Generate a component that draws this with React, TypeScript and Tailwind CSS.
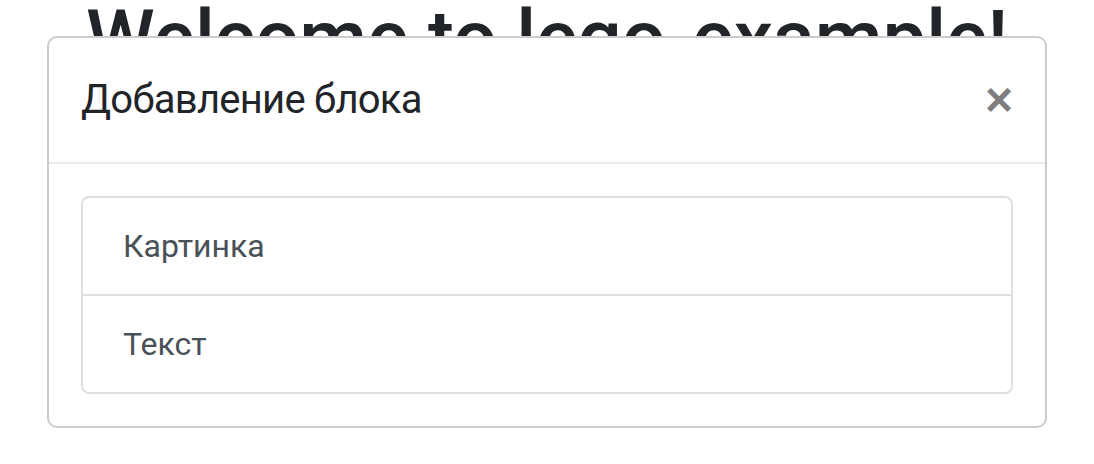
import React from 'react'

const items = ['Картинка', 'Текст']

const App: React.FC = () => {
  return (
    <div className="relative h-[464px] w-full overflow-hidden bg-white" style={{ fontFamily: 'Roboto, "Noto Sans", sans-serif' }}>
      <h1 className="mt-[-9px] text-center text-[78px] font-medium leading-[96px] tracking-[-0.15px] text-[#212529]">Welcome to lego-example!</h1>

      {/* модальное окно поверх заголовка */}
      <div className="absolute inset-x-0 top-[36px] mx-auto w-[1000px] rounded-[10px] border-2 border-[#cccccc] bg-white">
        <div className="flex items-start justify-between border-b-2 border-[#e9ecef] p-[32px]">
          <h5 className="text-[40px] font-normal leading-[60px] tracking-[-0.75px] text-[#212529]">Добавление блока</h5>
          <button className="text-[48px] font-bold leading-[60px] text-black opacity-50" style={{ fontFamily: '"Liberation Sans", sans-serif' }}>
            ×
          </button>
        </div>
        <div className="p-[32px]">
          <ul className="rounded-[8px] border-2 border-[#dfdfdf]">
            {items.map((item, i) => (
              <li
                key={item}
                className={`px-[40px] py-[24px] text-[32px] leading-[48px] text-[#495057] ${i > 0 ? 'border-t-2 border-[#dfdfdf]' : ''}`}
              >
                {item}
              </li>
            ))}
          </ul>
        </div>
      </div>
    </div>
  )
}

export default App
